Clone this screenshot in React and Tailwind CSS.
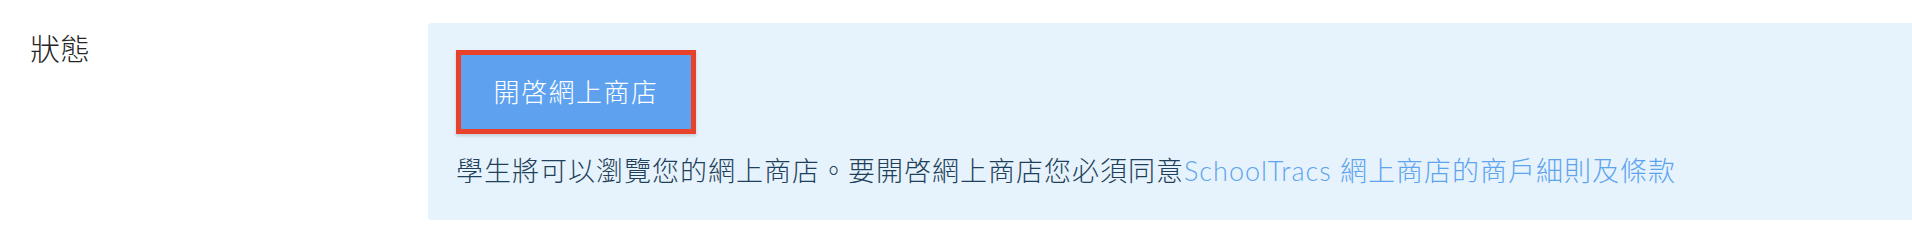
const font = "font-['Lato','Noto_Sans_CJK_TC',sans-serif]";

export default function App() {
  return (
    <div className={`flex h-[242px] w-full bg-white font-light ${font}`}>
      <div className="w-[428px] shrink-0 pl-[30px] pt-[28px] text-[30px] leading-[40px] text-[#262626]">
        狀態
      </div>
      <div className="mt-[23px] h-[197px] flex-1 rounded-l-[4px] bg-[#e6f3fc] pl-[28px] pt-[27px]">
        <button className="flex h-[84px] w-[240px] items-center justify-center border-[5px] border-[#e8432a] bg-[#5ea2ef] text-[26px] tracking-[1.5px] text-white shadow-[0_2px_3px_rgba(0,0,0,0.15)]">
          開啓網上商店
        </button>
        <p className="mt-[17px] text-[27px] leading-[40px] tracking-[1px] text-[#1f3f5a]">
          學生將可以瀏覽您的網上商店。要開啓網上商店您必須同意
          <a className="text-[#5ea3ee]">SchoolTracs 網上商店的商戶細則及條款</a>
        </p>
      </div>
    </div>
  );
}
